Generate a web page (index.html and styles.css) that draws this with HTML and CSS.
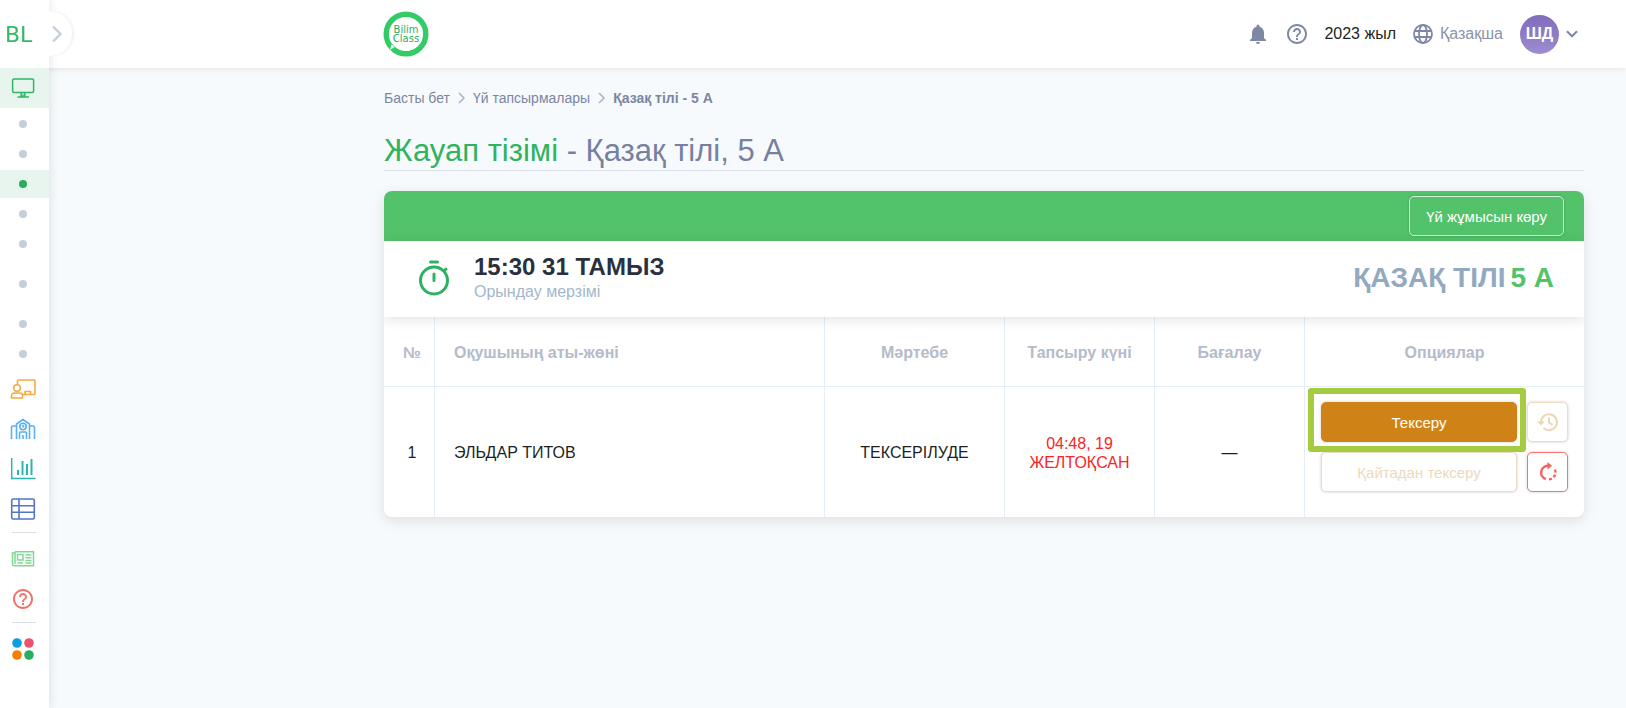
FILE: index.html
```html
<!DOCTYPE html>
<html lang="kk">
<head>
    <meta charset="UTF-8">
    <meta name="viewport" content="width=device-width, initial-scale=1.0">
    <title>Жауап тізімі - Қазақ тілі, 5 А</title>
    <link rel="stylesheet" href="styles.css">
</head>
<body>
    <aside class="sidebar">
        <a class="brand" href="#">BL</a>
        <nav class="menu">
            <a class="menu-icon active" href="#" aria-label="Сабақ">
                <svg width="24" height="22" viewBox="0 0 24 22" fill="none" stroke="#2fb566" stroke-width="1.5"><rect x="1.6" y="2" width="21" height="13.600" rx="1.500"/><path d="M10.500 15.600 10 19.500M13.500 15.600 14 19.500M6.500 20h11.500M12 17.500v2"/></svg>
            </a>
            <a class="menu-dot" href="#" aria-label="1"></a>
            <a class="menu-dot" href="#" aria-label="2"></a>
            <a class="menu-dot active" href="#" aria-label="3"></a>
            <a class="menu-dot" href="#" aria-label="4"></a>
            <a class="menu-dot" href="#" aria-label="5"></a>
            <a class="menu-dot spaced" href="#" aria-label="6"></a>
            <a class="menu-dot spaced" href="#" aria-label="7"></a>
            <a class="menu-dot" href="#" aria-label="8"></a>
            <a class="menu-icon" href="#" aria-label="Мұғалім">
                <svg width="26" height="22" viewBox="0 0 26 22" fill="none" stroke="#f3ab42" stroke-width="1.600"><path d="M7.500 6V3a1 1 0 0 1 1-1H24a1 1 0 0 1 1 1v12.500a1 1 0 0 1-1 1H13"/><circle cx="7" cy="10" r="3.300"/><path d="M1.500 20v-2.500a2.500 2.500 0 0 1 2.500-2.500h6a2.500 2.500 0 0 1 2.500 2.500V20zM15 16.500V13.500h5.500v3"/></svg>
            </a>
            <a class="menu-icon" href="#" aria-label="Мектеп">
                <svg width="26" height="22" viewBox="0 0 26 22" fill="none" stroke="#5ab0f2" stroke-width="1.600"><path d="M1.500 21V9.500A1.500 1.500 0 0 1 3 8h3.500M6.500 21V6L13 1.500 19.500 6v15M19.500 8H23a1.500 1.500 0 0 1 1.500 1.500V21M9.500 21v-6a1 1 0 0 1 1-1h5a1 1 0 0 1 1 1v6M13 17v4"/><circle cx="13" cy="8.500" r="3.200"/><path d="M13 6.800v2h1.300"/></svg>
            </a>
            <a class="menu-icon" href="#" aria-label="Статистика">
                <svg width="26" height="22" viewBox="0 0 26 22" fill="none" stroke="#2bb5ae" stroke-width="1.500"><path d="M1.700 0v20.500H25.500"/><path stroke-width="2" d="M8 12v5M12.500 3v14M17 6v11M21.500 1v16"/></svg>
            </a>
            <a class="menu-icon" href="#" aria-label="Кесте">
                <svg width="26" height="22" viewBox="0 0 26 22" fill="none" stroke="#5474c8" stroke-width="1.600"><rect x="1.700" y="1" width="22.600" height="20" rx="1.500"/><path d="M9 1v20M1.700 7.700h22.600M1.700 14.300h22.600"/></svg>
            </a>
            <hr>
            <a class="menu-icon" href="#" aria-label="Жаңалықтар">
                <svg width="24" height="18" viewBox="0 0 24 18" fill="none" stroke="#82d796" stroke-width="1.500"><path d="M4 1.700h18.500v14H3a1.500 1.500 0 0 1-1.500-1.500V3H4M4 1.700V14"/><rect x="6.500" y="4.500" width="5.500" height="5.500"/><path d="M14.500 5h6M14.500 7.700h6M14.500 10.400h6M6.500 13h5.500M14.500 13h6"/></svg>
            </a>
            <a class="menu-icon" href="#" aria-label="Көмек">
                <svg width="24" height="24" viewBox="0 0 24 24" fill="#f2726c"><path d="M11 18h2v-2h-2v2zm1-16C6.480 2 2 6.480 2 12s4.480 10 10 10 10-4.480 10-10S17.520 2 12 2zm0 18c-4.410 0-8-3.590-8-8s3.590-8 8-8 8 3.590 8 8-3.590 8-8 8zm0-14c-2.210 0-4 1.790-4 4h2c0-1.100.9-2 2-2s2 .9 2 2c0 2-3 1.750-3 5h2c0-2.250 3-2.500 3-5 0-2.210-1.790-4-4-4z"/></svg>
            </a>
            <hr>
            <a class="menu-icon" href="#" aria-label="Қосымшалар">
                <svg width="22" height="22" viewBox="0 0 22 22"><circle cx="5" cy="5" r="4.800" fill="#0b9de3"/><circle cx="17" cy="5" r="4.800" fill="#eb5470"/><circle cx="5" cy="17" r="4.800" fill="#f57f05"/><circle cx="17" cy="17" r="4.800" fill="#27ae60"/></svg>
            </a>
        </nav>
    </aside>
    <button class="sidebar-toggle" type="button" aria-label="Мәзір">
        <svg width="12" height="18" viewBox="0 0 12 18" fill="none" stroke="#c3cfdb" stroke-width="2.400"><path d="M2 1.500 9.500 9 2 16.500"/></svg>
    </button>

    <header class="header">
        <a class="logo" href="#">
            <svg width="46" height="46" viewBox="0 0 46 46">
                <circle cx="23" cy="23" r="19.800" fill="#fff" stroke="#33cb66" stroke-width="5.400"/>
                <path d="M7 39 8.500 33.500l3 2.500z" fill="#fff"/>
                <text x="23" y="22" class="logo-text">Bilim</text>
                <text x="23" y="31" class="logo-text">Class</text>
            </svg>
        </a>
        <div class="header-tools">
            <button class="tool" type="button" aria-label="Хабарландырулар">
                <svg width="16" height="20" viewBox="0 0 16 20" fill="#7e88a5"><path d="M8 20a2 2 0 0 0 2-2H6a2 2 0 0 0 2 2zM14 14V9c0-3.100-1.600-5.600-4.500-6.300V2a1.500 1.500 0 0 0-3 0v.7C3.600 3.400 2 5.900 2 9v5l-2 2v1h16v-1z"/></svg>
            </button>
            <button class="tool help" type="button" aria-label="Көмек">
                <svg width="24" height="24" viewBox="0 0 24 24" fill="#7e88a5"><path d="M11 18h2v-2h-2v2zm1-16C6.480 2 2 6.480 2 12s4.480 10 10 10 10-4.480 10-10S17.520 2 12 2zm0 18c-4.410 0-8-3.590-8-8s3.590-8 8-8 8 3.590 8 8-3.590 8-8 8zm0-14c-2.210 0-4 1.790-4 4h2c0-1.100.9-2 2-2s2 .9 2 2c0 2-3 1.750-3 5h2c0-2.250 3-2.500 3-5 0-2.210-1.790-4-4-4z"/></svg>
            </button>
            <span class="year">2023 жыл</span>
            <button class="tool language" type="button">
                <svg width="20" height="20" viewBox="0 0 20 20" fill="none" stroke="#7e88a5" stroke-width="1.800"><circle cx="10" cy="10" r="9"/><ellipse cx="10" cy="10" rx="4" ry="9"/><path d="M1.500 7h17M1.500 13h17"/></svg>
                Қазақша
            </button>
            <button class="tool profile" type="button">
                <span class="avatar">ШД</span>
                <svg width="12" height="8" viewBox="0 0 12 8" fill="none" stroke="#7e88a5" stroke-width="2"><path d="M1 1.300l5 5 5-5"/></svg>
            </button>
        </div>
    </header>

    <main class="content">
        <nav class="breadcrumbs">
            <a href="#">Басты бет</a>
            <svg width="7" height="12" viewBox="0 0 7 12" fill="none" stroke="#a3b4c6" stroke-width="1.500"><path d="M1 1l5 5-5 5"/></svg>
            <a href="#">Үй тапсырмалары</a>
            <svg width="7" height="12" viewBox="0 0 7 12" fill="none" stroke="#a3b4c6" stroke-width="1.500"><path d="M1 1l5 5-5 5"/></svg>
            <b>Қазақ тілі - 5 А</b>
        </nav>
        <h1 class="page-title"><span>Жауап тізімі</span> - Қазақ тілі, 5 А</h1>

        <section class="card">
            <div class="card-bar">
                <button class="btn btn-light" type="button">Үй жұмысын көру</button>
            </div>
            <div class="card-info">
                <svg class="timer" width="32" height="36" viewBox="0 0 32 36" fill="none" stroke="#2eb162" stroke-width="3"><circle cx="16" cy="20.500" r="13.500"/><path stroke-linecap="round" d="M12.500 2h7M16 14v6.500M26 11l2-2"/></svg>
                <div class="deadline">
                    <h2>15:30 31 ТАМЫЗ</h2>
                    <p>Орындау мерзімі</p>
                </div>
                <h2 class="subject">ҚАЗАҚ ТІЛІ<span>5 А</span></h2>
            </div>
            <table class="answers">
                <colgroup>
                    <col class="col-number">
                    <col>
                    <col class="col-status">
                    <col class="col-date">
                    <col class="col-mark">
                    <col class="col-options">
                </colgroup>
                <thead>
                    <tr>
                        <th>№</th>
                        <th class="name">Оқушының аты-жөні</th>
                        <th>Мәртебе</th>
                        <th>Тапсыру күні</th>
                        <th>Бағалау</th>
                        <th>Опциялар</th>
                    </tr>
                </thead>
                <tbody>
                    <tr>
                        <td>1</td>
                        <td class="name">ЭЛЬДАР ТИТОВ</td>
                        <td>ТЕКСЕРІЛУДЕ</td>
                        <td class="late">04:48, 19 ЖЕЛТОҚСАН</td>
                        <td>—</td>
                        <td class="options">
                            <div class="actions">
                                <div class="highlight">
                                    <button class="btn btn-check" type="button">Тексеру</button>
                                </div>
                                <button class="btn btn-outline" type="button" aria-label="Тарих" disabled>
                                    <svg width="22" height="20" viewBox="0 0 22 20" fill="none" stroke="#ecd6b6" stroke-width="2"><path d="M4 10a8 8 0 1 1 2.500 6M12 5.500V10.500l3.500 2.500"/><path d="M0 9.500h8L4 13.500z" fill="#ecd6b6" stroke="none"/></svg>
                                </button>
                                <button class="btn btn-outline" type="button" disabled>Қайтадан тексеру</button>
                                <button class="btn btn-danger" type="button" aria-label="Қайтару">
                                    <svg width="20" height="20" viewBox="0 0 20 20" fill="none" stroke="#f9615c" stroke-width="2.400"><path d="M11 3.800H9.500a6.800 6.800 0 0 0-1.500 13.300"/><path d="M11 17.300a7 7 0 0 0 5.500-10.500" stroke-dasharray="3 2"/><path d="M9.500 0l4.500 3.800-4.500 3.800z" fill="#f9615c" stroke="none"/></svg>
                                </button>
                            </div>
                        </td>
                    </tr>
                </tbody>
            </table>
        </section>
    </main>
</body>
</html>
```
FILE: styles.css
```css
* {
    box-sizing: border-box;
}
body {
    margin: 0;
    min-height: 100vh;
    font-family: "Liberation Sans", Arial, sans-serif;
    font-size: 16px;
    color: #1d1f24;
    background-color: #f6fafd;
}
a {
    color: inherit;
    text-decoration: none;
}
h1, h2, p {
    margin: 0;
}
button {
    font-family: inherit;
    cursor: pointer;
}
svg {
    display: block;
    flex-shrink: 0;
}

/* sidebar */
.sidebar {
    position: fixed;
    top: 0;
    bottom: 0;
    left: 0;
    z-index: 3;
    width: 49px;
    background-color: #fff;
    box-shadow: 0 0 10px rgba(0, 0, 0, 0.12);
}
.brand {
    display: flex;
    align-items: center;
    height: 68px;
    padding-left: 5px;
    font-family: "DejaVu Sans", sans-serif;
    font-size: 22px;
    color: #35b868;
}
.menu {
    display: flex;
    flex-direction: column;
    gap: 2px;
}
.menu-icon {
    display: flex;
    align-items: center;
    justify-content: center;
    height: 38px;
    padding-right: 3px;
}
.menu-icon.active {
    height: 40px;
}
.menu-dot {
    display: flex;
    align-items: center;
    justify-content: center;
    height: 28px;
    padding-right: 3px;
}
.menu-dot::before {
    content: "";
    width: 8px;
    height: 8px;
    border-radius: 50%;
    background-color: #c4cfda;
}
.menu-dot.active::before {
    background-color: #27ae60;
}
.menu-dot.spaced {
    margin-top: 10px;
}
.active {
    background-color: #e8f5ee;
}
.menu hr {
    width: 24px;
    margin: 2px 0 5px 12px;
    border: none;
    border-top: 1px solid #dcdfe6;
}
.sidebar-toggle {
    position: fixed;
    top: 11px;
    left: 27px;
    z-index: 4;
    display: flex;
    align-items: center;
    justify-content: flex-end;
    width: 45px;
    height: 45px;
    padding: 0 9px 0 0;
    border: none;
    border-radius: 50%;
    background-color: #fff;
    box-shadow: 2px 0 3px rgba(0, 0, 0, 0.06);
    clip-path: inset(0 -6px 0 20px);
}

/* header */
.header {
    position: relative;
    z-index: 2;
    display: flex;
    align-items: center;
    justify-content: space-between;
    height: 68px;
    padding: 0 48px 0 383px;
    background-color: #fff;
    box-shadow: 0 0 6px rgba(0, 0, 0, 0.12);
}
.logo-text {
    font-family: "DejaVu Sans", sans-serif;
    font-size: 10px;
    text-anchor: middle;
    fill: #2fae5c;
}
.header-tools {
    display: flex;
    align-items: center;
}
.tool {
    display: flex;
    align-items: center;
    padding: 0;
    border: none;
    background: none;
    font-size: 16px;
    color: #8b93ab;
}
.help {
    margin: 0 15px 0 19px;
}
.language {
    gap: 7px;
    margin: 0 17px;
}
.profile {
    gap: 7px;
}
.avatar {
    display: flex;
    align-items: center;
    justify-content: center;
    width: 39px;
    height: 39px;
    border-radius: 50%;
    background: linear-gradient(#7f6cbb, #9c8dd0);
    font-weight: bold;
    color: #fff;
}

/* page */
.content {
    padding: 21px 42px 40px 384px;
}
.breadcrumbs {
    display: flex;
    align-items: center;
    gap: 8px;
    height: 18px;
    font-size: 14px;
    color: #7c86a2;
}
.page-title {
    margin-top: 25px;
    border-bottom: 1px solid #dce2e9;
    font-size: 31px;
    font-weight: normal;
    line-height: 38px;
    color: #7680a0;
}
.page-title span {
    color: #2fb35f;
}
.card {
    margin-top: 20px;
    border-radius: 8px;
    background-color: #fff;
    box-shadow: 0 4px 14px rgba(0, 0, 0, 0.1);
    overflow: hidden;
}
.card-bar {
    display: flex;
    align-items: center;
    justify-content: flex-end;
    height: 50px;
    padding-right: 20px;
    background-color: #52c36a;
}
.card-info {
    position: relative;
    display: flex;
    align-items: center;
    height: 76px;
    padding: 0 30px 2px 34px;
    box-shadow: 0 2px 12px rgba(0, 0, 0, 0.12);
}
.deadline {
    margin-left: 24px;
}
.deadline h2 {
    font-size: 24px;
    line-height: 28px;
    color: #2b303f;
}
.deadline p {
    line-height: 22px;
    color: #a3b7cb;
}
.subject {
    margin-left: auto;
    font-size: 28px;
    color: #92a9bf;
}
.subject span {
    margin-left: 5px;
    color: #52c36a;
}

/* buttons */
.btn {
    display: flex;
    align-items: center;
    justify-content: center;
    width: 100%;
    height: 40px;
    padding: 0;
    border: 1px solid;
    border-radius: 5px;
    background-color: #fff;
    box-shadow: 0 0 3px rgba(0, 0, 0, 0.2);
    font-size: 15px;
}
.btn-light {
    width: auto;
    padding: 0 16px;
    border-color: #d3f0da;
    background-color: #52c36a;
    color: #fff;
}
.btn-check {
    border-color: #cf8317;
    background-color: #cf8317;
    color: #fff;
}
.btn-outline {
    border-color: #efdcc4;
    color: #ecd9bd;
}
.btn-danger {
    border-color: #f9726d;
}

/* answers table */
.answers {
    width: 100%;
    border-collapse: separate;
    border-spacing: 0;
    table-layout: fixed;
}
.col-number {
    width: 51px;
}
.col-status {
    width: 180px;
}
.col-date, .col-mark {
    width: 150px;
}
.col-options {
    width: 279px;
}
.answers th, .answers td {
    padding: 2px 16px 0;
    border-right: 1px solid #e5edfb;
    text-align: center;
}
.answers th:first-child, .answers td:first-child {
    padding-left: 6px;
    padding-right: 0;
}
.answers th:last-child, .answers td:last-child {
    border-right: none;
}
.answers th {
    height: 70px;
    border-bottom: 1px solid #e5edfb;
    color: #b4bbca;
}
.answers .name {
    padding-left: 19px;
    text-align: left;
}
.answers .late {
    line-height: 19px;
    color: #fb2525;
}
.answers .options {
    padding: 15px 16px 25px;
}
.actions {
    display: grid;
    grid-template-columns: 1fr 41px;
    gap: 10px;
}
.highlight {
    position: relative;
}
.highlight::after {
    content: "";
    position: absolute;
    inset: -14px -9px -10px -13px;
    border: 6px solid #a5cb40;
    border-radius: 3px;
    pointer-events: none;
}
```
